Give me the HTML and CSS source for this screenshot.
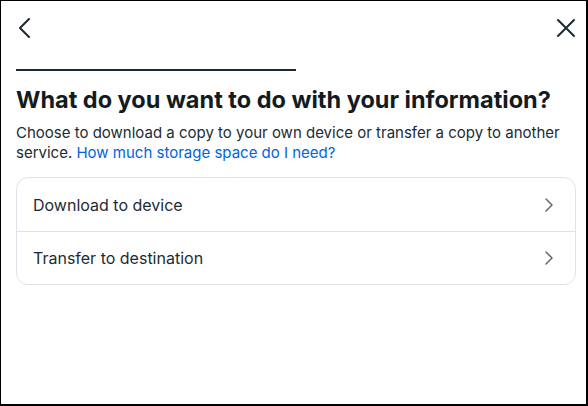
FILE: index.html
```html
<!DOCTYPE html>
<html>
<head>
<meta charset="utf-8">
<link rel="stylesheet" href="styles.css">
</head>
<body>
<div class="dialog">
  <div class="topbar">
    <button class="icon-btn back" aria-label="Back">
      <svg width="14" height="20" viewBox="0 0 14 20"><path d="M12 1 L3 10 L12 19" fill="none" stroke="#1c2b33" stroke-width="2" stroke-linecap="round" stroke-linejoin="round"/></svg>
    </button>
    <button class="icon-btn close" aria-label="Close">
      <svg width="20" height="20" viewBox="0 0 20 20"><path d="M2 2 L18 18 M18 2 L2 18" fill="none" stroke="#1c2b33" stroke-width="2" stroke-linecap="round"/></svg>
    </button>
  </div>
  <div class="progress"><div class="progress-fill"></div></div>
  <h1 class="title">What do you want to do with your information?</h1>
  <p class="desc">Choose to download a copy to your own device or transfer a copy to another service. <a href="#" class="link">How much storage space do I need?</a></p>
  <div class="card">
    <div class="row"><span>Download to device</span>
      <svg class="chev" width="8" height="14" viewBox="0 0 8 14"><path d="M1 1 L7 7 L1 13" fill="none" stroke="#65676b" stroke-width="1.5" stroke-linecap="round" stroke-linejoin="round"/></svg>
    </div>
    <div class="row"><span>Transfer to destination</span>
      <svg class="chev" width="8" height="14" viewBox="0 0 8 14"><path d="M1 1 L7 7 L1 13" fill="none" stroke="#65676b" stroke-width="1.5" stroke-linecap="round" stroke-linejoin="round"/></svg>
    </div>
  </div>
</div>
</body>
</html>
```
FILE: styles.css
```css
* { box-sizing: border-box; }
html, body { margin: 0; padding: 0; background: #fff; }
body { font-family: Inter, "Noto Sans", sans-serif; color: #1c2b33; }
.dialog {
  width: 588px;
  height: 406px;
  border-top: 1px solid #000;
  border-left: 1px solid #000;
  border-right: 2px solid #000;
  border-bottom: 2px solid #000;
  padding: 0 10px 0 15px;
  display: flex;
  flex-direction: column;
}
.topbar {
  display: flex;
  justify-content: space-between;
  align-items: center;
  height: 54px;
}
.icon-btn {
  background: none;
  border: 0;
  padding: 0;
  display: flex;
  align-items: center;
  justify-content: center;
}
.back { margin-left: 1px; }
.progress {
  height: 2px;
  margin-top: 14px;
  width: 560px;
}
.progress-fill { width: 280px; height: 2px; background: #1c2b33; }
.title {
  margin: 15px 0 0 0;
  font-size: 23.5px;
  line-height: 28px;
  font-weight: 700;
  color: #141b20;
}
.desc {
  margin: 9px 0 0 0;
  font-size: 15px;
  line-height: 20px;
  width: 560px;
}
.link { color: #0064e0; text-decoration: none; }
.card {
  margin-top: 14px;
  width: 560px;
  border: 1px solid #dee3e9;
  border-radius: 12px;
}
.row {
  display: flex;
  justify-content: space-between;
  align-items: center;
  height: 53px;
  padding: 0 22px 0 16px;
  font-size: 16px;
}
.row + .row { border-top: 1px solid #dee3e9; height: 53px; }
```
